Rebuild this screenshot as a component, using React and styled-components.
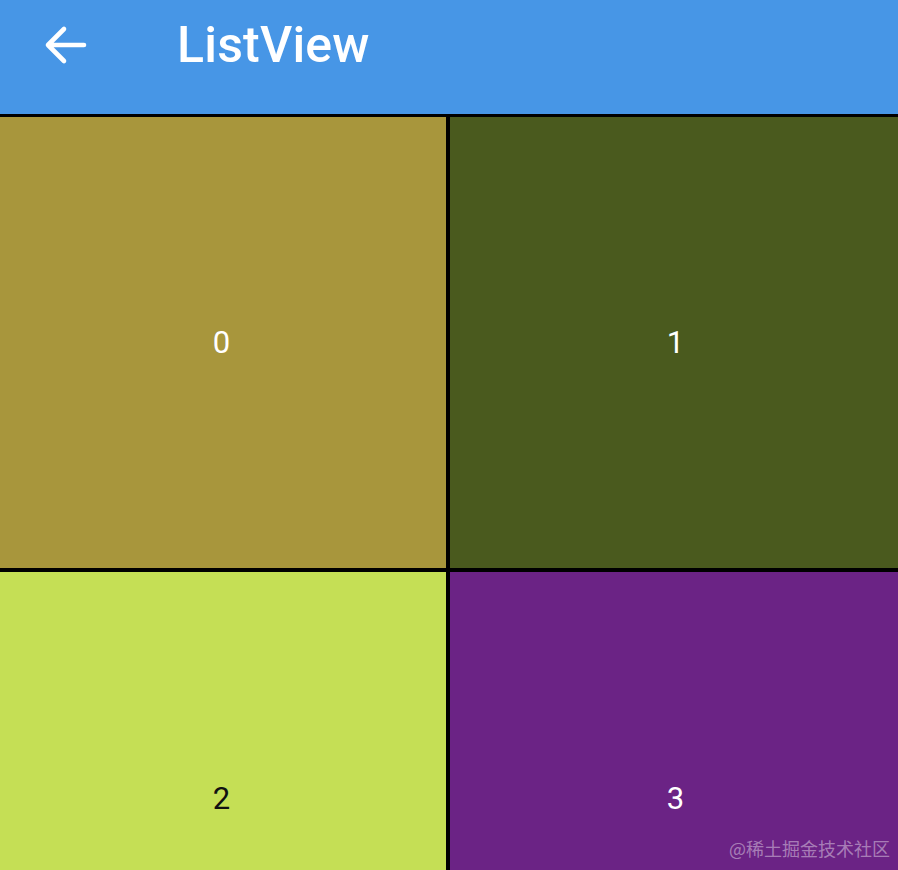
import React from 'react'
import styled, { createGlobalStyle } from 'styled-components'

const GlobalStyle = createGlobalStyle`
    html, body {
        margin     : 0;
        padding    : 0;
        background : #000;
        overflow   : hidden;
    }
    body {
        font-family : Roboto, "Noto Sans", "Noto Sans CJK SC", sans-serif;
    }
`

const tiles = [
    { label: '0', bg: '#a8963c', fg: '#ffffff' },
    { label: '1', bg: '#4a5a1e', fg: '#ffffff' },
    { label: '2', bg: '#c5df55', fg: '#111111' },
    { label: '3', bg: '#6b2385', fg: '#ffffff' },
]

const BackArrow = () => (
    <svg width="46" height="40" viewBox="0 0 46 40" fill="none">
        <path
            d="M42 20 H6 M22 4 L6 20 L22 36"
            stroke="#fff"
            strokeWidth="4.6"
            strokeLinecap="round"
            strokeLinejoin="round"
        />
    </svg>
)

const App = () => {
    return (
        <Screen>
            <GlobalStyle />
            <AppBar>
                <BackButton>
                    <BackArrow />
                </BackButton>
                <Title>ListView</Title>
            </AppBar>
            <Grid>
                {tiles.map((t) => (
                    <Tile key={t.label} $bg={t.bg} $fg={t.fg}>
                        {t.label}
                    </Tile>
                ))}
            </Grid>
            <Watermark>@稀土掘金技术社区</Watermark>
        </Screen>
    )
}

export default App

const Screen = styled.div`
    position   : relative;
    width      : 898px;
    height     : 870px;
    overflow   : hidden;
    background : #000;
`

const AppBar = styled.header`
    height      : 114px;
    background  : #4796e6;
    display     : flex;
    align-items : center;
    box-shadow  : 0 1px 2px rgba(0, 0, 0, 0.4);
`

const BackButton = styled.div`
    width           : 46px;
    height          : 40px;
    margin          : -24px 0 0 42px;
    display         : flex;
    align-items     : center;
    justify-content : center;
`

const Title = styled.h1`
    margin         : -24px 0 0 89px;
    color          : #fff;
    font-family    : Roboto, sans-serif;
    font-size      : 50px;
    font-weight    : 500;
    letter-spacing : 0.2px;
`

const Grid = styled.div`
    display               : grid;
    grid-template-columns : 446px 448px;
    grid-template-rows    : 451px 451px;
    gap                   : 4px;
    padding-top           : 3px;
`

const Tile = styled.div`
    background      : ${(p) => p.$bg};
    color           : ${(p) => p.$fg};
    display         : flex;
    align-items     : center;
    justify-content : center;
    font-size       : 31px;
    font-family     : Roboto, sans-serif;

    &:nth-child(odd) {
        padding-right : 3px;
    }

    &:nth-child(even) {
        padding-left : 3px;
    }

    &:nth-child(n + 3) {
        align-items : flex-start;
        padding-top : 208px;
    }
`

const Watermark = styled.div`
    position    : absolute;
    right       : 8px;
    bottom      : 9px;
    color       : rgba(255, 255, 255, 0.42);
    font-size   : 18px;
    font-family : "Noto Sans CJK SC", sans-serif;
`
